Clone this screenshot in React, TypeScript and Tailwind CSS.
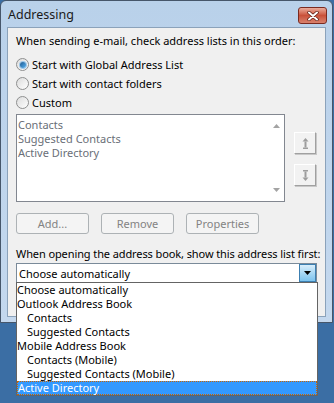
import React from "react";

const font = "font-['Noto_Sans',sans-serif]";

function Radio({ checked, label }: { checked?: boolean; label: string }) {
  return (
    <div className="flex items-center h-[19px]">
      <span className="relative w-[13px] h-[13px] rounded-full border border-[#8e8f8f] bg-gradient-to-br from-[#dcdcdc] to-[#ffffff] flex items-center justify-center">
        {checked && (
          <span className="w-[6px] h-[6px] rounded-full bg-gradient-to-br from-[#1b5a92] to-[#5cb4f2] shadow-[0_0_0_1px_#9cc7e9]" />
        )}
      </span>
      <span className="ml-[3px] text-black">{label}</span>
    </div>
  );
}

function ArrowButton({ dir }: { dir: "up" | "down" }) {
  return (
    <div className="w-[22px] h-[22px] bg-[#f2f2f2] border border-t-white border-l-white border-r-[#a0a0a0] border-b-[#a0a0a0] shadow-[1px_1px_0_#c8c8c8] flex items-center justify-center">
      <svg width="7" height="11" viewBox="0 0 7 11" className={dir === "down" ? "rotate-180" : ""}>
        <polygon points="3.5,0 0.5,3.5 6.5,3.5" fill="#9d9d9d" />
        <rect x="2.5" y="3.5" width="2" height="6" fill="#9d9d9d" />
        <rect x="1" y="9.5" width="5" height="1.5" fill="#9d9d9d" />
      </svg>
    </div>
  );
}

function Btn({ label }: { label: string }) {
  return (
    <div className="w-[73px] h-[21px] rounded-[3px] border border-[#adb2b5] bg-[#f4f4f4] text-[#838383] flex items-center justify-center">
      {label}
    </div>
  );
}

const dropItems: { label: string; indent?: boolean }[] = [
  { label: "Choose automatically" },
  { label: "Outlook Address Book" },
  { label: "Contacts", indent: true },
  { label: "Suggested Contacts", indent: true },
  { label: "Mobile Address Book" },
  { label: "Contacts (Mobile)", indent: true },
  { label: "Suggested Contacts (Mobile)", indent: true },
];

export default function App() {
  return (
    <div className={`w-[334px] h-[403px] bg-[#3b6ea4] relative overflow-hidden text-[11px] leading-[15px] ${font}`}>
      {/* window */}
      <div className="w-[333px] h-[323px] border border-[#46566a] rounded-t-[6px] bg-gradient-to-b from-[#b9d1ea] to-[#c4d8ee] flex flex-col px-[6px] pb-[5px]">
        <div className="h-[26px] flex items-start justify-between">
          <span className="mt-[6px] ml-[1px] text-[12.5px] leading-[16px] text-[#1a1a1a]">Addressing</span>
          <div className="mt-[6px] mr-[-1px] w-[29px] h-[17px] rounded-[3px] border border-[#7a2a20] bg-gradient-to-b from-[#e9ab9b] via-[#c9513a] to-[#d8816d] flex items-center justify-center">
            <svg width="12" height="10" viewBox="0 0 12 10">
              <path d="M2 1.5 L10 8.5 M10 1.5 L2 8.5" stroke="#5a1a10" strokeWidth="3.4" strokeLinecap="round" />
              <path d="M2 1.5 L10 8.5 M10 1.5 L2 8.5" stroke="#ffffff" strokeWidth="2" strokeLinecap="round" />
            </svg>
          </div>
        </div>

        <div className="flex-1 bg-[#f0f0f0] border border-[#8ba2ba] flex flex-col pl-[8px] text-black">
          <div className="mt-[5px] whitespace-nowrap">When sending e-mail, check address lists in this order:</div>

          <div className="mt-[7px] flex flex-col">
            <Radio checked label="Start with Global Address List" />
            <Radio label="Start with contact folders" />
            <Radio label="Custom" />
          </div>

          <div className="mt-[2px] flex items-start">
            <div className="w-[269px] h-[88px] border border-[#828790] bg-white flex">
              <div className="flex-1 flex flex-col pl-[1px] pt-[3px] leading-[14px] text-[#6a6f78]">
                <span>Contacts</span>
                <span>Suggested Contacts</span>
                <span>Active Directory</span>
              </div>
              <div className="w-[16px] flex flex-col items-center justify-between py-[9px]">
                <svg width="7" height="4" viewBox="0 0 7 4">
                  <polygon points="3.5,0 0,4 7,4" fill="#a3a3a3" />
                </svg>
                <svg width="7" height="4" viewBox="0 0 7 4">
                  <polygon points="0,0 7,0 3.5,4" fill="#a3a3a3" />
                </svg>
              </div>
            </div>
            <div className="ml-[9px] mt-[18px] flex flex-col gap-[10px]">
              <ArrowButton dir="up" />
              <ArrowButton dir="down" />
            </div>
          </div>

          <div className="mt-[11px] flex gap-[12px]">
            <Btn label="Add..." />
            <Btn label="Remove" />
            <Btn label="Properties" />
          </div>

          <div className="mt-[12px] whitespace-nowrap tracking-[-0.1px]">
            When opening the address book, show this address list first:
          </div>

          <div className="mt-[2px] w-[301px] h-[20px] border border-[#7a8a99] bg-white flex items-center">
            <span className="flex-1 pl-[2px]">Choose automatically</span>
            <div className="w-[17px] h-[18px] border border-[#3c7fb1] bg-gradient-to-b from-[#d9eefb] via-[#a9d8f4] to-[#7cc3ee] flex items-center justify-center">
              <svg width="7" height="4" viewBox="0 0 7 4">
                <polygon points="0,0 7,0 3.5,4" fill="#000" />
              </svg>
            </div>
          </div>
        </div>
      </div>

      {/* open dropdown list */}
      <div className="absolute left-[16px] top-[282px] w-[302px] h-[114px] border border-[#646464] bg-white flex flex-col leading-[14px] text-black">
        {dropItems.map((it) => (
          <div key={it.label} className={`h-[14px] ${it.indent ? "pl-[10px]" : "pl-[0px]"}`}>
            {it.label}
          </div>
        ))}
        <div className="h-[14px] bg-[#3399ff] text-white border border-dotted border-[#cc6600] leading-[12px]">
          Active Directory
        </div>
      </div>
    </div>
  );
}
